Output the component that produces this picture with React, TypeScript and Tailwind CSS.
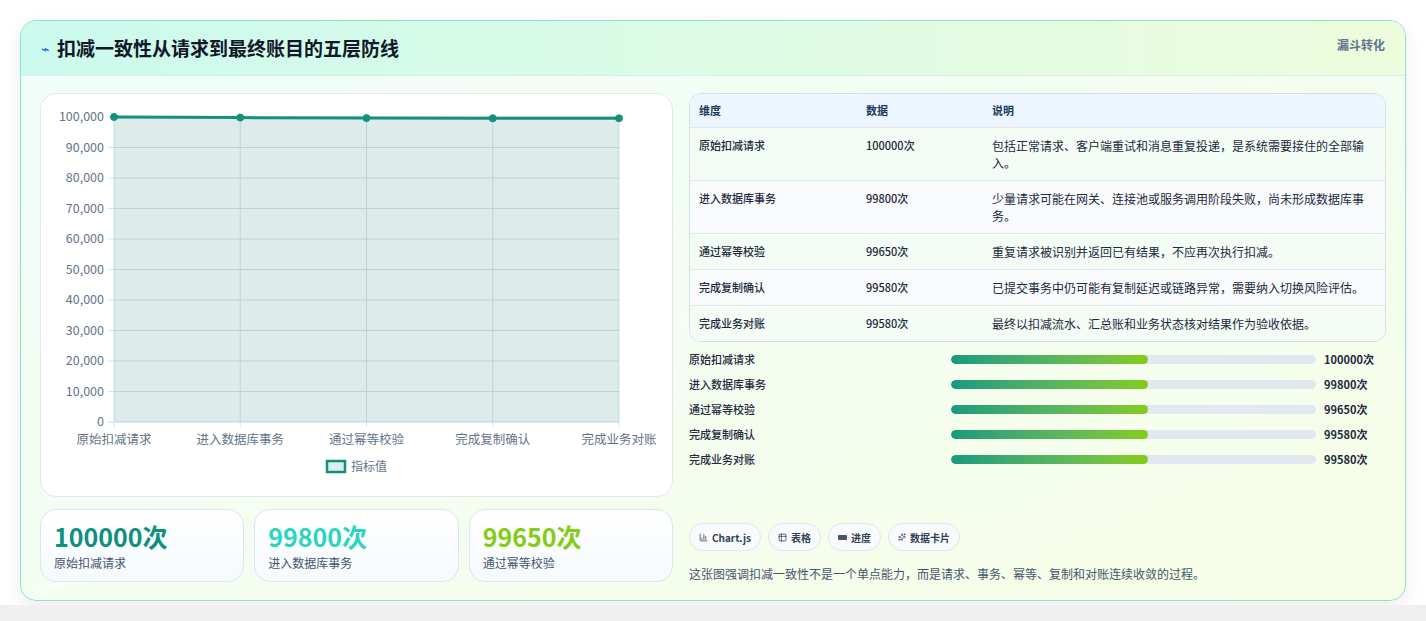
import { BarChart3, Table2, Sparkles } from "lucide-react"

const rows = [
  { name: "原始扣减请求", v: 100000, d: "包括正常请求、客户端重试和消息重复投递，是系统需要接住的全部输入。" },
  { name: "进入数据库事务", v: 99800, d: "少量请求可能在网关、连接池或服务调用阶段失败，尚未形成数据库事务。" },
  { name: "通过幂等校验", v: 99650, d: "重复请求被识别并返回已有结果，不应再次执行扣减。" },
  { name: "完成复制确认", v: 99580, d: "已提交事务中仍可能有复制延迟或链路异常，需要纳入切换风险评估。" },
  { name: "完成业务对账", v: 99580, d: "最终以扣减流水、汇总账和业务状态核对结果作为验收依据。" },
]

const font = { fontFamily: '"Noto Sans CJK SC", "Noto Sans", sans-serif' }

function Chart() {
  const x0 = 73, x1 = 578, y0 = 23, y1 = 328
  const ticks = Array.from({ length: 11 }, (_, i) => i)
  const pts = rows.map((r, i) => [x0 + (i * (x1 - x0)) / 4, y0 + (1 - r.v / 100000) * (y1 - y0)])
  const line = pts.map((p) => p.join(",")).join(" ")
  return (
    <svg width="632" height="403" className="block" style={font}>
      {ticks.map((i) => {
        const y = y0 + (i * (y1 - y0)) / 10
        return (
          <g key={i}>
            <line x1={x0 - 6} x2={x1} y1={y} y2={y} stroke={i === 10 ? "#cbd5e1" : "#d5e3e8"} />
            <text x={x0 - 10} y={y + 4} textAnchor="end" fontSize="12.5" fill="#64748b">
              {((10 - i) * 10000).toLocaleString("en-US")}
            </text>
          </g>
        )
      })}
      {pts.map((p, i) => (
        <g key={i}>
          <line x1={p[0]} x2={p[0]} y1={y0} y2={y1 + 5} stroke="#d5e3e8" />
          <text x={p[0]} y={y1 + 22} textAnchor="middle" fontSize="12.5" fill="#64748b">{rows[i].name}</text>
        </g>
      ))}
      <polygon points={`${x0},${y1} ${line} ${x1},${y1}`} fill="#0f766e" fillOpacity="0.14" />
      <polyline points={line} fill="none" stroke="#13917f" strokeWidth="3" />
      {pts.map((p, i) => (
        <circle key={i} cx={p[0]} cy={p[1]} r="3.5" fill="#13917f" stroke="#13917f" />
      ))}
      <rect x="286" y="367" width="18" height="11" fill="#dbeeed" stroke="#13917f" strokeWidth="2.5" />
      <text x="310" y="377" fontSize="12" fill="#64748b">指标值</text>
    </svg>
  )
}

export default function App() {
  return (
    <div className="min-h-[621px] bg-white pt-5 px-5" style={font}>
      <div className="rounded-2xl border border-[#8ee3cf] shadow-[0_6px_18px_rgba(0,0,0,0.08)] overflow-hidden bg-gradient-to-br from-[#f0fdfa] to-[#f7fee7]">
        <div className="h-[55px] flex items-center justify-between px-5 bg-gradient-to-r from-[#cbfaee] to-[#edfcdc] border-b border-[#d5f0e8]">
          <div className="flex items-center gap-2">
            <span className="text-[14px] text-blue-600">⌁</span>
            <h1 className="text-[19px] font-bold text-[#111827]">扣减一致性从请求到最终账目的五层防线</h1>
          </div>
          <span className="text-xs font-semibold text-slate-500 self-start mt-4">漏斗转化</span>
        </div>
        <div className="flex gap-4 px-[19px] pt-[17px] pb-[18px]">
          <div className="w-[633px] flex flex-col gap-3">
            <div className="bg-white rounded-2xl border border-[#e2e8f0] h-[404px]">
              <Chart />
            </div>
            <div className="grid grid-cols-3 gap-[10px]">
              {[
                ["100000次", "原始扣减请求", "text-[#0f8f7e]"],
                ["99800次", "进入数据库事务", "text-[#2dd4bf]"],
                ["99650次", "通过幂等校验", "text-[#84cc16]"],
              ].map(([v, l, c]) => (
                <div key={l} className="h-[73px] rounded-2xl border border-[#dbe6ef] bg-gradient-to-b from-white to-[#f6fafd] px-[13px] pt-[10px]">
                  <div className={`text-[25px] font-bold leading-8 ${c}`}>{v}</div>
                  <div className="text-xs text-slate-600 mt-[3px]">{l}</div>
                </div>
              ))}
            </div>
          </div>
          <div className="flex-1 flex flex-col">
            <div className="rounded-xl border border-[#cfe1e6] overflow-hidden bg-white">
              <table className="w-full text-[11px] text-slate-800 table-fixed">
                <thead>
                  <tr className="bg-[#edf6fe] text-[#1e3a5f] h-[33px] text-left">
                    <th className="font-semibold pl-[9px] w-[176px]">维度</th>
                    <th className="font-semibold w-[126px]">数据</th>
                    <th className="font-semibold">说明</th>
                  </tr>
                </thead>
                <tbody>
                  {rows.map((r, i) => (
                    <tr key={r.name} className={`border-t border-[#e2e8f0] ${i % 2 ? "bg-[#f8fafc]" : "bg-[#f3fcf5]"}`}>
                      <td className="pl-[9px] py-[9px] align-top font-medium">{r.name}</td>
                      <td className="py-[9px] align-top font-medium">{r.v}次</td>
                      <td className="py-[9px] pr-[18px] align-top leading-[17px] text-[12px]">{r.d}</td>
                    </tr>
                  ))}
                </tbody>
              </table>
            </div>
            <div className="mt-[10px] flex flex-col gap-[10px]">
              {rows.map((r) => (
                <div key={r.name} className="flex items-center h-[15px] text-[11px] font-medium text-slate-800">
                  <span className="w-[262px]">{r.name}</span>
                  <div className="w-[365px] h-[9px] rounded-full bg-[#e2e8f0] overflow-hidden">
                    <div className="h-full w-[54%] rounded-full bg-gradient-to-r from-[#149a7e] to-[#84cc16]" />
                  </div>
                  <span className="ml-2 font-bold">{r.v}次</span>
                </div>
              ))}
            </div>
            <div className="mt-auto">
              <div className="flex gap-[7px] text-[10px] font-semibold text-slate-700">
                <span className="flex items-center gap-1 h-7 px-[9px] rounded-full border border-[#e2e8f0] bg-[#f8fafc]"><BarChart3 size={9} />Chart.js</span>
                <span className="flex items-center gap-1 h-7 px-[9px] rounded-full border border-[#e2e8f0] bg-[#f8fafc]"><Table2 size={9} />表格</span>
                <span className="flex items-center gap-1 h-7 px-[9px] rounded-full border border-[#e2e8f0] bg-[#f8fafc]"><span className="w-[9px] h-[5px] bg-slate-600 rounded-[1px]" />进度</span>
                <span className="flex items-center gap-1 h-7 px-[9px] rounded-full border border-[#e2e8f0] bg-[#f8fafc]"><Sparkles size={8} />数据卡片</span>
              </div>
              <p className="mt-[15px] text-xs text-slate-600">这张图强调扣减一致性不是一个单点能力，而是请求、事务、幂等、复制和对账连续收敛的过程。</p>
            </div>
          </div>
        </div>
      </div>
      <div className="h-[22px] mt-1 -mx-5 bg-[#f0f0f0]" />
    </div>
  )
}
